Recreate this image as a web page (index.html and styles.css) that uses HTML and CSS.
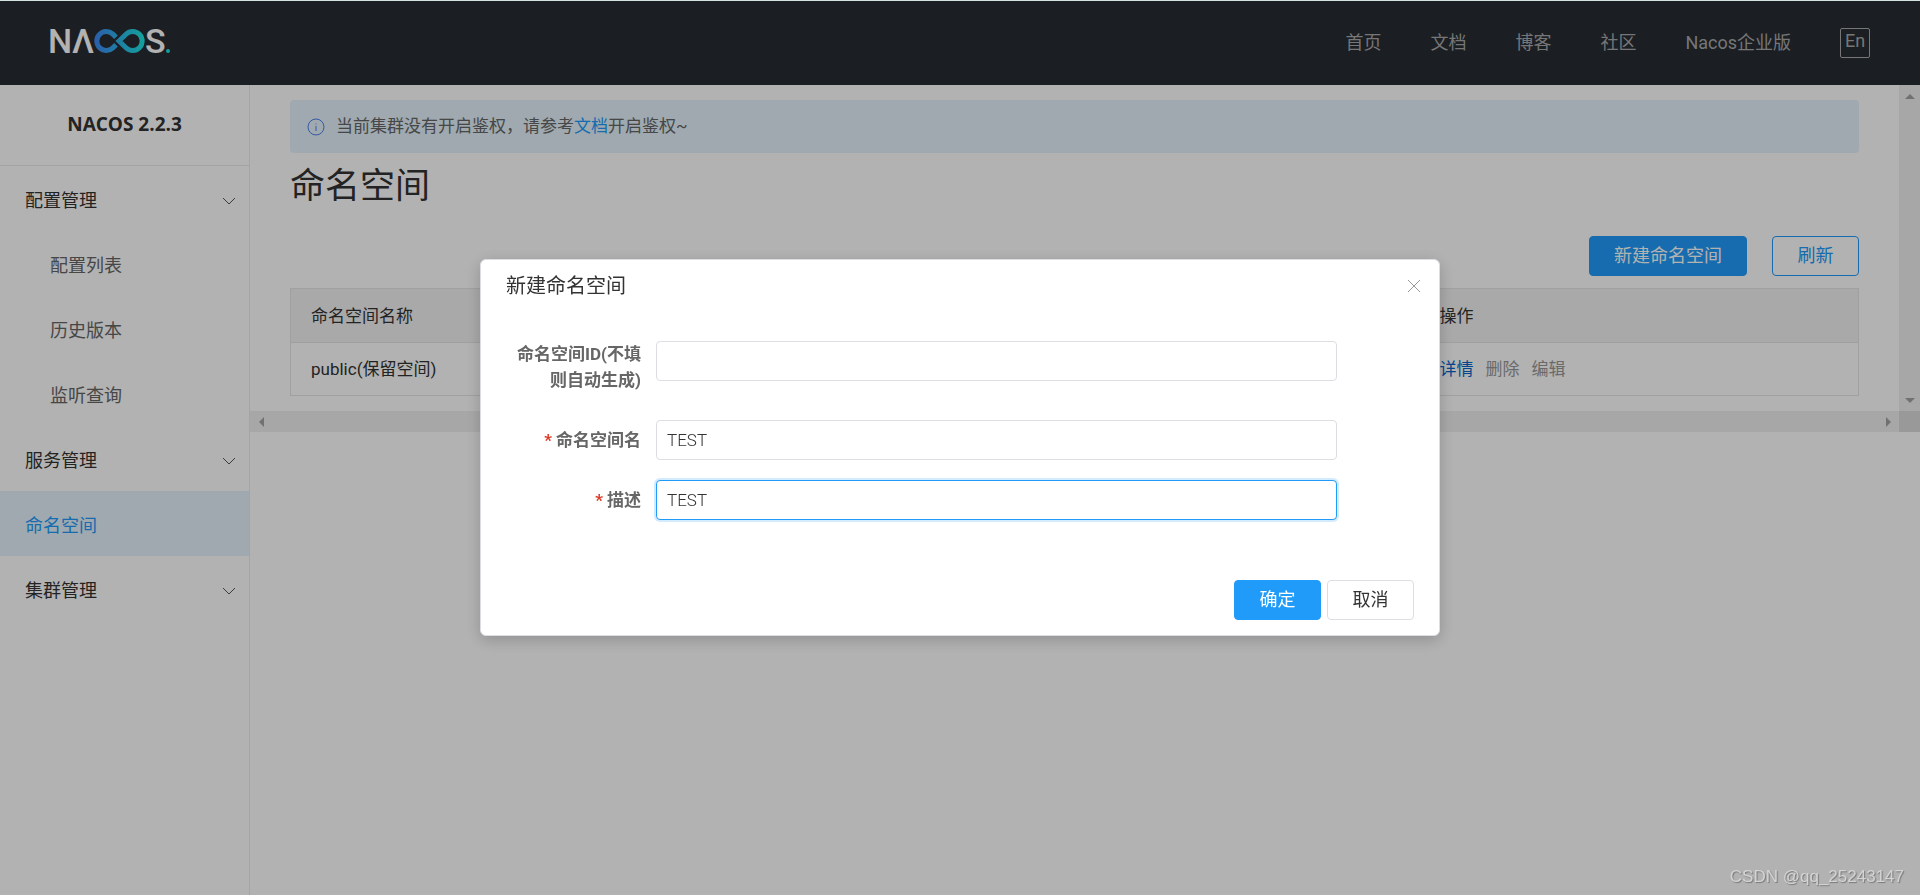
FILE: index.html
```html
<!DOCTYPE html>
<html lang="zh-CN">
<head>
<meta charset="utf-8">
<title>Nacos</title>
<link rel="stylesheet" href="styles.css">
</head>
<body>
<div class="app">
  <header class="topbar">
    <svg class="logo" viewBox="0 0 122 24" role="img" aria-label="Nacos">
      <defs>
        <linearGradient id="loop" gradientUnits="userSpaceOnUse" x1="44" y1="0" x2="94" y2="0">
          <stop offset="0" stop-color="#3f86f5"/>
          <stop offset="1" stop-color="#1ce6e0"/>
        </linearGradient>
      </defs>
      <text class="logo-text" x="-2" y="24">N</text>
      <text class="logo-text" x="22" y="24">Λ</text>
      <g fill="none" stroke="url(#loop)" stroke-width="5">
        <path d="M66 8.300L62.600 4.900A9.500 9.500 0 1 0 62.600 19.100L66 15.700"/>
        <path d="M69 12L76 5.200A9.500 9.500 0 1 1 76 18.800Z"/>
      </g>
      <text class="logo-text" x="95" y="24">S</text>
      <circle cx="118" cy="22" r="2" fill="#1ce6e0"/>
    </svg>
    <nav class="topnav">
      <a href="#">首页</a>
      <a href="#">文档</a>
      <a href="#">博客</a>
      <a href="#">社区</a>
      <a href="#">Nacos企业版</a>
      <button class="lang" type="button">En</button>
    </nav>
  </header>
  <div class="layout">
    <aside class="sidebar">
      <h2 class="version">NACOS 2.2.3</h2>
      <nav class="menu">
        <a class="item" href="#">配置管理<svg class="chevron" viewBox="0 0 14 8"><path d="M1 1l6 6 6-6"/></svg></a>
        <a class="item item-sub" href="#">配置列表</a>
        <a class="item item-sub" href="#">历史版本</a>
        <a class="item item-sub" href="#">监听查询</a>
        <a class="item" href="#">服务管理<svg class="chevron" viewBox="0 0 14 8"><path d="M1 1l6 6 6-6"/></svg></a>
        <a class="item item-active" href="#">命名空间</a>
        <a class="item" href="#">集群管理<svg class="chevron" viewBox="0 0 14 8"><path d="M1 1l6 6 6-6"/></svg></a>
      </nav>
    </aside>
    <div class="pane">
      <main class="content">
        <div class="alert">
          <svg class="info" viewBox="0 0 18 18"><circle cx="9" cy="9" r="8"/><path d="M9 5.500v1M9 8v5"/></svg>
          <p class="alert-text">当前集群没有开启鉴权，请参考<a href="#">文档</a>开启鉴权~</p>
        </div>
        <h1 class="heading">命名空间</h1>
        <div class="toolbar">
          <button class="btn btn-primary" type="button">新建命名空间</button>
          <button class="btn btn-outline" type="button">刷新</button>
        </div>
        <table class="table">
          <colgroup><col class="col-name"><col></colgroup>
          <thead><tr><th>命名空间名称</th><th>操作</th></tr></thead>
          <tbody>
            <tr>
              <td>public(保留空间)</td>
              <td><div class="actions"><a href="#">详情</a><span>删除</span><span>编辑</span></div></td>
            </tr>
          </tbody>
        </table>
      </main>
      <div class="track track-y">
        <svg class="arrow" viewBox="0 0 10 10"><path d="M0 8l5-5 5 5z"/></svg>
        <svg class="arrow" viewBox="0 0 10 10"><path d="M0 3l5 5 5-5z"/></svg>
      </div>
      <div class="track track-x">
        <svg class="arrow" viewBox="0 0 10 10"><path d="M8 0L3 5l5 5z"/></svg>
        <svg class="arrow" viewBox="0 0 10 10"><path d="M3 0l5 5-5 5z"/></svg>
      </div>
      <div class="corner"></div>
    </div>
  </div>
</div>
<div class="overlay">
  <form class="dialog" role="dialog" aria-labelledby="dialog-title">
    <div class="dialog-head">
      <h2 class="dialog-title" id="dialog-title">新建命名空间</h2>
      <button class="close" type="button" aria-label="关闭"><svg viewBox="0 0 14 14"><path d="M1 1l12 12M13 1L1 13"/></svg></button>
    </div>
    <div class="dialog-body">
      <label class="label label-tall" for="ns-id">命名空间ID(不填则自动生成)</label>
      <input class="input" id="ns-id" type="text">
      <label class="label required" for="ns-name">命名空间名</label>
      <input class="input" id="ns-name" type="text" value="TEST">
      <label class="label required" for="ns-desc">描述</label>
      <input class="input input-focus" id="ns-desc" type="text" value="TEST">
    </div>
    <div class="dialog-foot">
      <button class="btn btn-primary" type="button">确定</button>
      <button class="btn" type="button">取消</button>
    </div>
  </form>
</div>
<div class="watermark">CSDN @qq_25243147</div>
</body>
</html>
```
FILE: styles.css
```css
* {
  box-sizing: border-box;
}

body {
  margin: 0;
  font: 18px/26px Roboto, "Noto Sans CJK SC", sans-serif;
  color: #333;
  background: #fff;
}

a {
  color: inherit;
  text-decoration: none;
}

h1, h2, p {
  margin: 0;
  font-weight: 400;
}

button, input {
  font: inherit;
  color: inherit;
}

svg {
  flex: none;
}

.app {
  display: flex;
  flex-direction: column;
  min-height: 100vh;
  border-top: 1px solid #d3e2df;
}

.topbar {
  display: flex;
  align-items: center;
  justify-content: space-between;
  height: 84px;
  padding: 0 50px;
  background: #272c33;
}

.logo {
  width: 122px;
  height: 24px;
  margin-bottom: 4px;
  overflow: visible;
}

.logo-text {
  font: 500 34px Roboto, sans-serif;
  fill: #fff;
}

.topnav {
  display: flex;
  align-items: center;
  gap: 49px;
  color: #aaa;
}

.lang {
  width: 30px;
  height: 30px;
  padding: 0 0 4px;
  line-height: 22px;
  background: none;
  border: 1px solid #aaa;
  border-radius: 2px;
}

.layout {
  display: flex;
  flex: 1;
}

.sidebar {
  flex: none;
  width: 250px;
  border-right: 1px solid #ebebeb;
}

.version {
  height: 81px;
  font: 700 19px/78px "Open Sans", sans-serif;
  text-align: center;
  border-bottom: 1px solid #ebebeb;
}

.item {
  display: flex;
  align-items: center;
  justify-content: space-between;
  height: 65px;
  padding: 4px 13px 0 25px;
}

.item-sub {
  padding-left: 50px;
  color: #666;
}

.item-active {
  color: #209bfa;
  background: #e4f3fb;
}

.chevron {
  width: 14px;
  height: 8px;
  fill: none;
  stroke: #555;
}

.pane {
  flex: 1;
  display: grid;
  grid-template-columns: 1fr 21px;
  grid-template-rows: auto 21px;
  align-content: start;
}

.content {
  padding: 15px 40px;
}

.alert {
  display: flex;
  align-items: center;
  gap: 11px;
  height: 53px;
  padding: 0 17px;
  color: #666;
  background: #e4f3fb;
  border-radius: 4px;
}

.alert-text {
  padding-bottom: 2px;
  font-size: 17px;
}

.alert-text a {
  color: #209bfa;
}

.info {
  width: 18px;
  height: 18px;
  fill: none;
  stroke: #4a80f0;
}

.heading {
  padding-top: 2px;
  font-size: 35px;
  line-height: 64px;
}

.toolbar {
  display: flex;
  justify-content: flex-end;
  gap: 25px;
  margin: 17px 0 12px;
}

.btn {
  min-width: 87px;
  height: 40px;
  padding: 0 24px;
  line-height: 36px;
  background: #fff;
  border: 1px solid #dcdee3;
  border-radius: 4px;
}

.btn-primary {
  color: #fff;
  background: #209bfa;
  border-color: #209bfa;
}

.btn-outline {
  color: #209bfa;
  border-color: #209bfa;
}

.table {
  width: 100%;
  table-layout: fixed;
  font-size: 17px;
  border-collapse: collapse;
  border: 1px solid #e6e6e6;
}

.col-name {
  width: 72%;
}

.table th,
.table td {
  height: 53px;
  padding: 0 20px;
  font-weight: 400;
  text-align: left;
  border-bottom: 1px solid #e6e6e6;
}

.table th {
  height: 54px;
  background: #f3f3f3;
}

.actions {
  display: flex;
  gap: 12px;
  color: #999;
}

.actions a {
  color: #06c;
}

.track {
  display: flex;
  align-items: center;
  justify-content: space-between;
  padding: 6px;
  background: #f0f0f0;
}

.track-y {
  flex-direction: column;
}

.corner {
  background: #dcdcdc;
}

.arrow {
  width: 10px;
  height: 10px;
  fill: #a3a3a3;
}

.overlay {
  position: fixed;
  inset: 1px 0 0;
  display: flex;
  align-items: center;
  justify-content: center;
  padding-bottom: 2px;
  background: rgba(0, 0, 0, .3);
}

.dialog {
  width: 50%;
  background: #fff;
  border: 1px solid #dcdee3;
  border-radius: 6px;
  box-shadow: 0 4px 16px rgba(0, 0, 0, .2);
}

.dialog-head {
  display: flex;
  align-items: center;
  justify-content: space-between;
  padding: 10px 18px 10px 25px;
}

.dialog-title {
  font-size: 20px;
  line-height: 32px;
}

.close {
  display: flex;
  padding: 0;
  background: none;
  border: 0;
}

.close svg {
  width: 14px;
  height: 14px;
  fill: none;
  stroke: #999;
}

.dialog-body {
  display: grid;
  grid-template-columns: 150px 75%;
  align-items: start;
  row-gap: 20px;
  padding: 29px 25px 60px;
}

.label {
  padding: 7px 15px 7px 0;
  font-size: 17px;
  font-weight: 700;
  text-align: right;
  color: #666;
}

.label-tall {
  padding-top: 0;
}

.required::before {
  content: "*";
  margin-right: 4px;
  color: #d93a26;
}

.input {
  width: 100%;
  height: 40px;
  padding: 0 10px;
  font-size: 17px;
  font-weight: 300;
  background: #fff;
  border: 1px solid #dcdee3;
  border-radius: 4px;
  outline: 0;
}

.input-focus {
  border-color: #209bfa;
  box-shadow: 0 0 0 2px #d2ebfe;
}

.dialog-foot {
  display: flex;
  justify-content: flex-end;
  gap: 6px;
  padding: 0 25px 15px;
}

.watermark {
  position: fixed;
  right: 16px;
  bottom: 5px;
  font: 17px/26px "Liberation Sans", Arial, sans-serif;
  color: #d4d4d4;
  text-shadow: 1px 1px 1px #777;
}
```
